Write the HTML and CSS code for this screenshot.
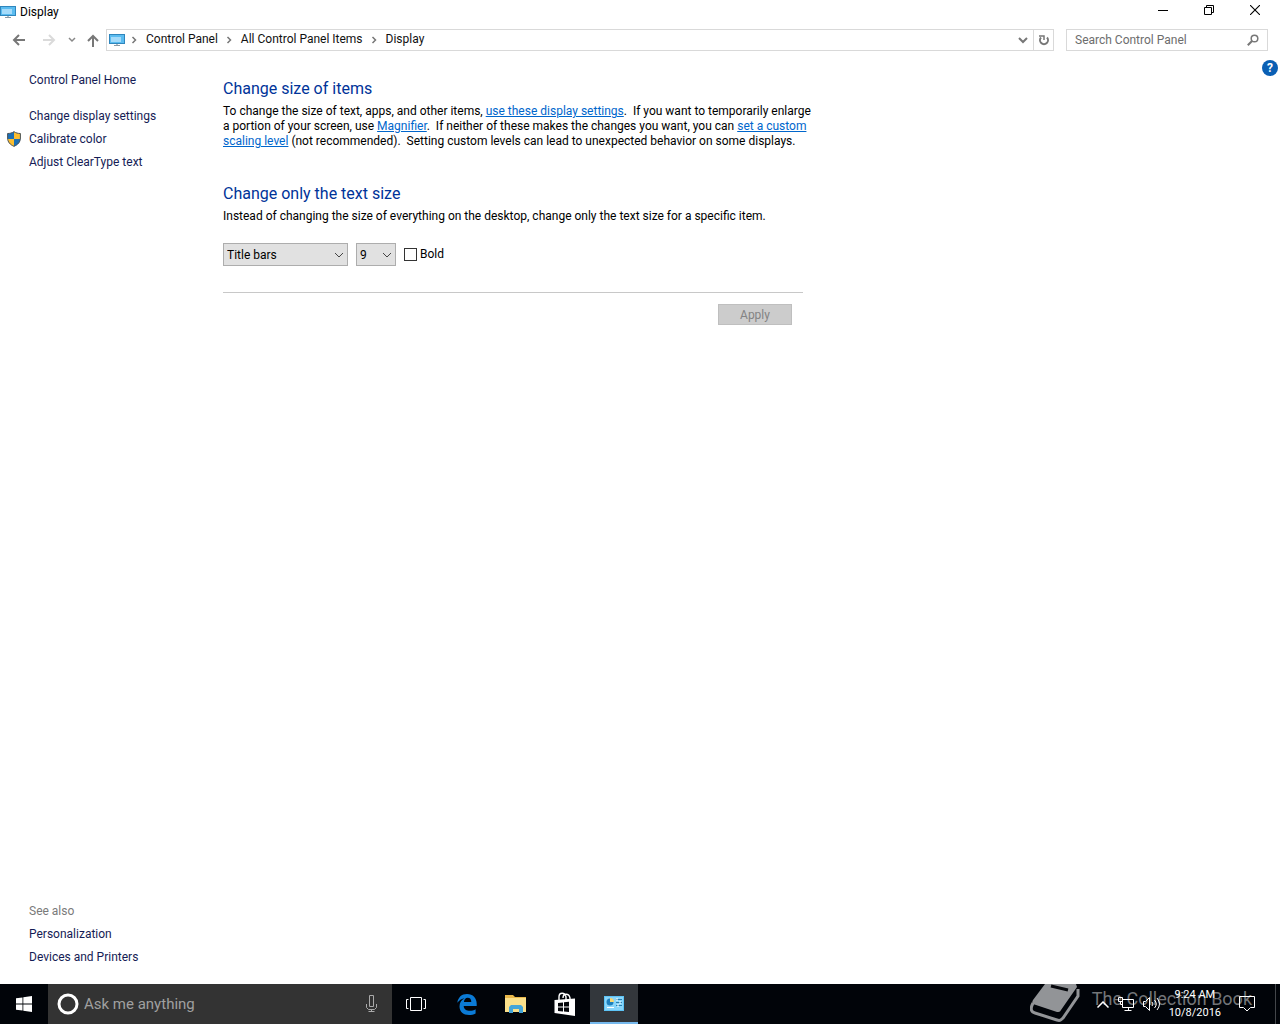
FILE: index.html
```html
<!DOCTYPE html>
<html lang="en">
<head>
    <meta charset="UTF-8">
    <meta name="viewport" content="width=device-width, initial-scale=1.0">
    <title>Display</title>
    <link rel="stylesheet" href="styles.css">
</head>
<body>

    <svg class="defs" width="0" height="0" aria-hidden="true">
        <symbol id="monitor" viewBox="0 0 16 12">
            <rect x="0.5" y="0.5" width="15" height="9" fill="#5bbcf0" stroke="#2f86bd"/>
            <path d="M2 3h10v5H2z" fill="#a5dbfa"/>
            <path d="M5 11h6v1H5z" fill="#8b9aa5"/>
            <path d="M7 10h2v1H7z" fill="#b5c0c8"/>
        </symbol>
        <symbol id="crumb-arrow" viewBox="0 0 6 8">
            <path d="M1.5 1l3 3-3 3" fill="none" stroke="#777" stroke-width="1.5"/>
        </symbol>
        <symbol id="chevron" viewBox="0 0 10 6">
            <path d="M1 1l4 4 4-4" fill="none" stroke="currentColor"/>
        </symbol>
    </svg>

    <header class="titlebar">
        <svg class="app-icon" width="16" height="12"><use href="#monitor"/></svg>
        <span class="title">Display</span>
        <div class="window-buttons">
            <button aria-label="Minimize">
                <svg width="10" height="10"><path d="M0 5.5h10" stroke="#000"/></svg>
            </button>
            <button aria-label="Restore">
                <svg width="10" height="10" fill="none" stroke="#000"><path d="M0.5 2.5h7v7h-7zM2.5 2.5v-2h7v7h-2"/></svg>
            </button>
            <button aria-label="Close">
                <svg width="10" height="10"><path d="M0 0l10 10M10 0L0 10" stroke="#000" stroke-width="1.1"/></svg>
            </button>
        </div>
    </header>

    <div class="navbar">
        <button class="nav-button" aria-label="Back">
            <svg width="14" height="12" fill="none" stroke="#777" stroke-width="2"><path d="M7 1L2 6l5 5M2 6h11"/></svg>
        </button>
        <button class="nav-button" aria-label="Forward">
            <svg width="14" height="12" fill="none" stroke="#dadada" stroke-width="2"><path d="M7 1l5 5-5 5M12 6H1"/></svg>
        </button>
        <button class="nav-button recent" aria-label="Recent locations">
            <svg width="8" height="6" fill="none" stroke="#888" stroke-width="1.5"><path d="M1 1l3 3 3-3"/></svg>
        </button>
        <button class="nav-button up" aria-label="Up">
            <svg width="12" height="13" fill="none" stroke="#777" stroke-width="2"><path d="M1 7l5-5 5 5M6 2v11"/></svg>
        </button>
        <div class="address">
            <svg width="16" height="12"><use href="#monitor"/></svg>
            <svg class="arrow" width="6" height="8"><use href="#crumb-arrow"/></svg>
            <a href="#">Control Panel</a>
            <svg class="arrow" width="6" height="8"><use href="#crumb-arrow"/></svg>
            <a href="#">All Control Panel Items</a>
            <svg class="arrow" width="6" height="8"><use href="#crumb-arrow"/></svg>
            <a href="#">Display</a>
            <button class="history" aria-label="Previous locations">
                <svg width="10" height="7" fill="none" stroke="#777" stroke-width="2"><path d="M1 1l4 4 4-4"/></svg>
            </button>
            <button class="refresh" aria-label="Refresh">
                <svg width="12" height="12" fill="none" stroke="#777" stroke-width="2"><path d="M3 3.500A4 4 0 1 0 9 3.500"/><path d="M1 2h5v4" stroke-width="1.500"/></svg>
            </button>
        </div>
        <div class="search">
            <input type="text" placeholder="Search Control Panel" aria-label="Search Control Panel">
            <svg width="12" height="12" fill="none" stroke="#777"><circle cx="7.500" cy="4.500" r="3.300" stroke-width="1.500"/><path d="M5 7l-4.200 4.200" stroke-width="2"/></svg>
        </div>
    </div>

    <div class="content">
        <aside class="sidebar">
            <nav class="tasks">
                <a class="home" href="#">Control Panel Home</a>
                <a href="#">Change display settings</a>
                <a class="shielded" href="#">
                    <svg class="shield" width="14" height="16" viewBox="0 0 14 16">
                        <path d="M7 0.500C5 2 3 2.500 0.500 2.500V8H7z" fill="#1b6fb5"/>
                        <path d="M7 0.500c2 1.500 4 2 6.500 2V8H7z" fill="#fbbd2f"/>
                        <path d="M0.500 8H7v7.500C3.500 14 1 11.500 0.500 8z" fill="#fbbd2f"/>
                        <path d="M13.500 8H7v7.500c3.500-1.500 6-4 6.500-7.500z" fill="#1b6fb5"/>
                        <path d="M7 0.700C5 2 3 2.500 0.600 2.500V7c0 4 2.500 6.700 6.400 8.300 3.900-1.600 6.400-4.300 6.400-8.300V2.500C11 2.500 9 2 7 0.700z" fill="none" stroke="#4a5359"/>
                    </svg>
                    Calibrate color
                </a>
                <a href="#">Adjust ClearType text</a>
            </nav>
            <nav class="see-also">
                <span>See also</span>
                <a href="#">Personalization</a>
                <a href="#">Devices and Printers</a>
            </nav>
        </aside>

        <main>
            <h1>Change size of items</h1>
            <p>To change the size of text, apps, and other items, <a href="#">use these display settings</a>.&nbsp; If you want to temporarily enlarge<br>
            a portion of your screen, use <a href="#">Magnifier</a>.&nbsp; If neither of these makes the changes you want, you can <a href="#">set a custom<br>
            scaling level</a> (not recommended).&nbsp; Setting custom levels can lead to unexpected behavior on some displays.</p>

            <h1>Change only the text size</h1>
            <p>Instead of changing the size of everything on the desktop, change only the text size for a specific item.</p>

            <div class="text-options">
                <div class="select item">
                    <select aria-label="Item">
                        <option>Title bars</option>
                    </select>
                    <svg width="10" height="6"><use href="#chevron"/></svg>
                </div>
                <div class="select size">
                    <select aria-label="Text size">
                        <option>9</option>
                    </select>
                    <svg width="10" height="6"><use href="#chevron"/></svg>
                </div>
                <input type="checkbox" id="bold">
                <label for="bold">Bold</label>
            </div>

            <div class="actions">
                <button disabled>Apply</button>
            </div>
        </main>

        <button class="help" aria-label="Help">?</button>
    </div>

    <footer class="taskbar">
        <button class="start" aria-label="Start">
            <svg width="16" height="16" fill="#fff"><path d="M0 2.300l6.500-0.900v6.200H0zM7.300 1.300L16 0v7.600H7.300zM0 8.400h6.500v6.200L0 13.700zM7.300 8.400H16V16l-8.700-1.200z"/></svg>
        </button>
        <div class="cortana">
            <svg width="22" height="22"><circle cx="11" cy="11" r="9" fill="none" stroke="#fff" stroke-width="3"/></svg>
            <input type="text" placeholder="Ask me anything" aria-label="Ask me anything">
            <svg width="11" height="18" fill="none" stroke="#aaa"><path d="M3.500 0.500h4v11h-4zM0.500 9v3.500l2 2h6l2-2V9M5.500 14.500v2M2.500 16.500h6"/></svg>
        </div>
        <button class="task task-view" aria-label="Task View">
            <svg width="20" height="14" fill="none" stroke="#fff"><path d="M4.500 0.500h11v13h-11zM2.500 2.500h-2v9h2M17.500 2.500h2v9h-2"/></svg>
        </button>
        <button class="task" aria-label="Microsoft Edge">
            <svg width="20" height="22" viewBox="0 0 20 22"><path fill="#0b7bd6" d="M0.300 9.700C1 4.300 4.600 0.900 10 0.900c6 0 9.700 4.200 9.700 9.800v2.200H6.700c0.200 3.400 3 4.900 6.200 4.900 2.100 0 4-0.600 5.700-1.600v4.200c-2 1.100-4.200 1.500-6.500 1.500-5.800 0-9.600-3.400-9.600-8.500 0-3.600 1.900-6.600 5-8.100C5.200 5.700 2.400 7 0.300 9.700zM6.900 8.900h7.400c0-2.600-1.300-4.200-3.600-4.200-2.200 0-3.500 1.800-3.800 4.200z"/></svg>
        </button>
        <button class="task" aria-label="File Explorer">
            <svg width="22" height="20" viewBox="0 0 22 20"><path fill="#e9b84a" d="M0 1h8l2 2h11v4H0z"/><path fill="#fbe08a" d="M0 4h21v14H0z"/><path fill="#45a5d8" d="M4 19v-6l2-2h10l2 2v6h-4v-4H8v4z"/></svg>
        </button>
        <button class="task" aria-label="Store">
            <svg width="22" height="24" viewBox="0 0 22 24"><path d="M5 8V5c0-5 6-5 7 0v3M9 6c0-5 6-5 7 0v2" fill="none" stroke="#fff" stroke-width="1.400"/><path d="M0.500 8L21 6.500V24L0.500 21z" fill="#fff"/><path d="M4 10.900l5-0.500v4H4zM10 10.300l5-0.500v4.600h-5zM4 15.400h5v4l-5-0.500zM10 15.400h5V20l-5-0.500z" fill="#05070b"/></svg>
        </button>
        <button class="task active" aria-label="Control Panel">
            <svg width="20" height="15" viewBox="0 0 20 15"><rect width="20" height="15" fill="#5dc4f6"/><path d="M1 1h18v13H1z" fill="#88d5fa"/><circle cx="6" cy="6" r="3.500" fill="#1d7fbd"/><path d="M6 6V2a4 4 0 0 1 4 4z" fill="#f7d774"/><path d="M12 3.500h6M12 6.500h6M12 9.500h6" stroke="#287fae"/><path d="M3 11.500h7" stroke="#fff"/><path d="M13 2v3M16 5v3M14 8v3" stroke="#fff"/></svg>
        </button>

        <div class="watermark">
            <svg width="52" height="40" viewBox="0 0 52 40">
                <path fill="#929497" d="M15 0h31l1 3-16 23c-1 2-2 2-4 2L3 20c-1-1-1-2 0-4z"/>
                <path d="M21 2l17 4" stroke="#05070b" stroke-width="3"/>
                <path d="M3 19c-3 6-2 9 2 10l22 7c3 1 4 0 6-2l15-22V5" fill="none" stroke="#929497" stroke-width="3"/>
            </svg>
            <span>The Collection Book</span>
        </div>

        <div class="tray">
            <svg width="12" height="7" fill="none" stroke="#fff" stroke-width="1.500"><path d="M0.500 6.500l5.500-5.500 5.500 5.500"/></svg>
            <svg width="16" height="14" fill="none" stroke="#fff"><path d="M4.500 2.500h11v8h-11zM0.500 0.500h4v4h-4zM2.500 4.500v3h2M10.500 10.500v3M6.500 13.500h7"/></svg>
            <svg width="17" height="14" fill="none" stroke="#fff"><path d="M0.500 4.500h2l4-4v13l-4-4h-2zM9 5q2 2 0 4M11.500 3q3.500 4 0 8M14 1q5 6 0 12"/></svg>
            <time class="clock" datetime="2016-10-08T09:24">9:24 AM<br>10/8/2016</time>
            <svg class="notifications" width="16" height="16" fill="none" stroke="#fff"><path d="M0.500 0.500h15v11h-4l-3.500 3.500-3.500-3.500h-4z"/></svg>
        </div>
    </footer>

</body>
</html>
```
FILE: styles.css
```css
* {
    box-sizing: border-box;
}
body {
    margin: 0;
    min-height: 100vh;
    display: flex;
    flex-direction: column;
    background: #fff;
    color: #000;
    font-family: Roboto, "Open Sans", sans-serif;
    font-size: 12px;
    line-height: 15px;
}
button, input, select {
    font: inherit;
    color: inherit;
}
button {
    display: flex;
    align-items: center;
    justify-content: center;
    padding: 0;
    border: none;
    background: none;
}
svg {
    display: block;
    flex: none;
}
a {
    color: #151c55;
    text-decoration: none;
}
.defs {
    position: absolute;
}

/* title bar */
.titlebar {
    display: flex;
    align-items: center;
    gap: 4px;
    height: 24px;
}
.window-buttons {
    display: flex;
    align-self: flex-start;
    margin-left: auto;
    padding-right: 2px;
}
.window-buttons button {
    width: 46px;
    height: 20px;
}

/* navigation */
.navbar {
    display: flex;
    align-items: center;
    padding: 5px 12px 0 4px;
}
.nav-button {
    width: 30px;
    height: 22px;
}
.nav-button.recent {
    width: 16px;
}
.nav-button.up {
    width: 26px;
}
.address {
    flex: 1;
    display: flex;
    align-items: center;
    height: 22px;
    margin-right: 12px;
    padding-left: 2px;
    border: 1px solid #d9d9d9;
}
.address a {
    padding: 0 2px 2px 0;
    color: #111;
}
.address .arrow {
    margin: 0 9px 0 6px;
}
.history {
    width: 20px;
    height: 20px;
    margin-left: auto;
}
.refresh {
    width: 20px;
    height: 20px;
    border-left: 1px solid #d9d9d9;
}
.search {
    display: flex;
    align-items: center;
    width: 202px;
    height: 22px;
    padding: 0 8px;
    border: 1px solid #d9d9d9;
}
.search input {
    flex: 1;
    min-width: 0;
    padding: 0;
    border: none;
    outline: none;
}
.search input::placeholder {
    color: #6d6d6d;
    opacity: 1;
}

/* page */
.content {
    flex: 1;
    display: flex;
    position: relative;
}
.sidebar {
    display: flex;
    flex-direction: column;
    justify-content: space-between;
    width: 223px;
    padding: 18px 8px 15px 29px;
}
.tasks, .see-also {
    display: flex;
    flex-direction: column;
    align-items: flex-start;
}
.sidebar a, .sidebar span {
    line-height: 23px;
}
.sidebar .home {
    margin-bottom: 13px;
}
.sidebar span {
    color: #7a7a7a;
}
.shielded {
    position: relative;
}
.shield {
    position: absolute;
    left: -22px;
    top: 3px;
}
main {
    width: 580px;
    padding-top: 27px;
    white-space: nowrap;
}
h1 {
    margin: 0 0 5px;
    color: #003399;
    font-size: 16px;
    font-weight: normal;
    line-height: 21px;
}
p {
    margin: 0 0 34px;
}
main a {
    color: #0066cc;
    text-decoration: underline;
}
.text-options {
    display: flex;
    align-items: center;
    margin-top: -15px;
    padding-bottom: 26px;
    border-bottom: 1px solid #c8c8c8;
}
.select {
    position: relative;
    margin-right: 8px;
}
.select.item {
    width: 125px;
}
.select.size {
    width: 40px;
}
.select select {
    display: block;
    appearance: none;
    width: 100%;
    height: 23px;
    padding: 1px 3px 0;
    border: 1px solid #adadad;
    border-radius: 0;
    background: #e1e1e1;
}
.select svg {
    position: absolute;
    right: 4px;
    top: 9px;
    color: #444;
    pointer-events: none;
}
.text-options input {
    appearance: none;
    width: 13px;
    height: 13px;
    margin: 0 3px 0 0;
    border: 1px solid #333;
    background: #fff;
}
.text-options input:checked {
    background: #333;
}
.actions {
    display: flex;
    justify-content: flex-end;
    padding: 11px 11px 0 0;
}
.actions button {
    width: 74px;
    height: 21px;
    padding-top: 1px;
    border: 1px solid #bfbfbf;
    background: #ccc;
    color: #838383;
}
.help {
    position: absolute;
    right: 2px;
    top: 9px;
    width: 16px;
    height: 16px;
    border-radius: 50%;
    background: #0a5fb4;
    color: #fff;
    font-size: 12px;
    font-weight: bold;
}

/* taskbar */
.taskbar {
    position: relative;
    display: flex;
    height: 40px;
    overflow: hidden;
    background: #010409;
    color: #fff;
}
.start, .task {
    width: 48px;
}
.task {
    margin-right: 1px;
}
.task-view {
    margin-right: 3px;
}
.task.active {
    border-bottom: 2px solid #76b9ed;
    background: #33373c;
}
.cortana {
    display: flex;
    align-items: center;
    width: 344px;
    padding: 0 15px 0 9px;
    background: #333;
}
.cortana input {
    flex: 1;
    min-width: 0;
    padding: 0 0 0 5px;
    border: none;
    outline: none;
    background: none;
    font-size: 15px;
}
.cortana input::placeholder {
    color: #a0a0a0;
    opacity: 1;
}
.watermark {
    position: absolute;
    right: 28px;
    bottom: 0;
    display: flex;
    gap: 10px;
    color: #737578;
    font-size: 18px;
    line-height: 30px;
    white-space: nowrap;
}
.tray {
    position: relative;
    display: flex;
    align-items: center;
    gap: 9px;
    margin: 0 4px 0 auto;
    padding-right: 20px;
    border-right: 1px solid #43464a;
}
.clock {
    font-size: 11px;
    line-height: 18px;
    text-align: center;
}
.notifications {
    margin-left: 9px;
}
```
